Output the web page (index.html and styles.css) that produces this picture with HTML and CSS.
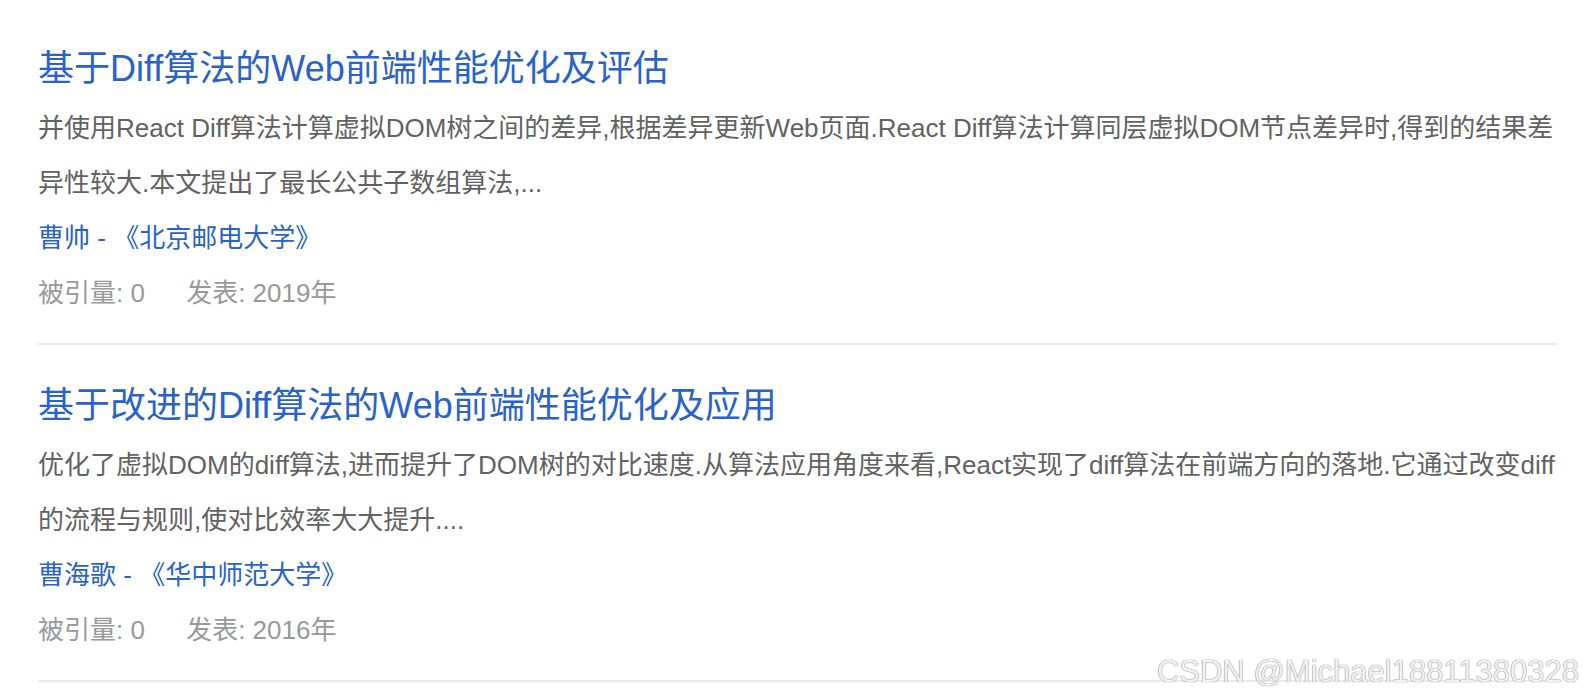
FILE: index.html
```
<!DOCTYPE html>
<html lang="zh-CN">

<head>
    <title>论文列表</title>
    <meta charset="UTF-8">
    <meta name="viewport" content="width=device-width, initial-scale=1">

    <link rel="stylesheet" href="styles.css">
</head>

<body>
    <div class="result-list">
        <div class="result">
            <a class="title" href="#">基于Diff算法的Web前端性能优化及评估</a>
            <p class="abstract">并使用React Diff算法计算虚拟DOM树之间的差异,根据差异更新Web页面.React Diff算法计算同层虚拟DOM节点差异时,得到的结果差异性较大.本文提出了最长公共子数组算法,...</p>
            <div class="source"><a href="#">曹帅</a> - <a href="#">《北京邮电大学》</a></div>
            <div class="meta">
                <span class="cite">被引量: 0</span>
                <span>发表: 2019年</span>
            </div>
        </div>
        <div class="result">
            <a class="title" href="#">基于改进的Diff算法的Web前端性能优化及应用</a>
            <p class="abstract">优化了虚拟DOM的diff算法,进而提升了DOM树的对比速度.从算法应用角度来看,React实现了diff算法在前端方向的落地.它通过改变diff的流程与规则,使对比效率大大提升....</p>
            <div class="source"><a href="#">曹海歌</a> - <a href="#">《华中师范大学》</a></div>
            <div class="meta">
                <span class="cite">被引量: 0</span>
                <span>发表: 2016年</span>
            </div>
        </div>
    </div>

    <div class="watermark">CSDN @Michael18811380328</div>
</body>

</html>
```

FILE: styles.css
```
body {
    background-color: #fff;
    margin: 0;
    padding: 8px 26px 0 38px;
    font-family: "Liberation Sans", "Noto Sans CJK SC", sans-serif;
}

.result-list {
    width: 1520px;
}

.result {
    padding: 29px 0 23px;
    border-bottom: 2px solid #e9e9ef;
}

.result a {
    color: #2962c9;
    text-decoration: none;
}

.title {
    display: block;
    font-size: 36px;
    line-height: 64px;
}

.abstract {
    margin: 0;
    font-size: 26px;
    line-height: 55px;
    color: #626262;
}

.source {
    font-size: 26px;
    line-height: 55px;
    color: #2962c9;
}

.meta {
    font-size: 26px;
    line-height: 54px;
    color: #999;
}

.cite {
    margin-right: 34px;
}

.watermark {
    position: absolute;
    right: 5px;
    bottom: 9px;
    font-size: 31px;
    line-height: 34px;
    color: #f2f2f2;
    text-shadow: 0 0 1px #777, 0 0 1px #999;
}
```
